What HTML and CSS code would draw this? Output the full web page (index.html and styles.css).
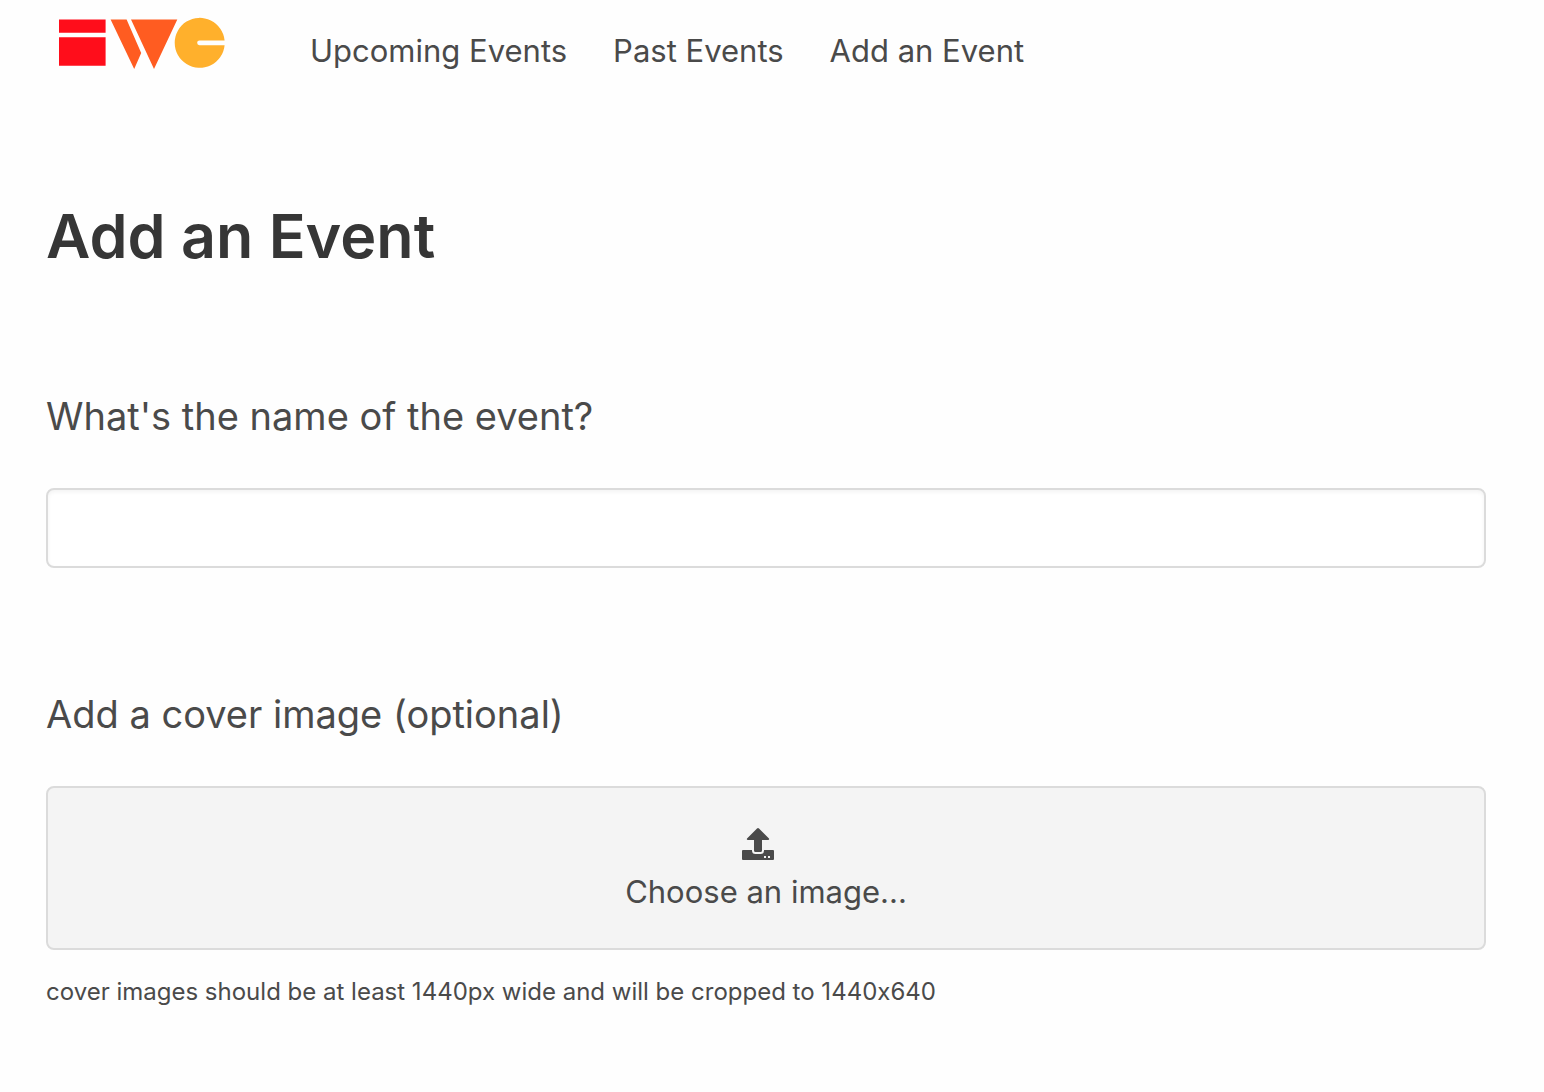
FILE: index.html
```html
<!DOCTYPE html>
<html lang="en">
<head>
    <meta charset="UTF-8">
    <meta name="viewport" content="width=device-width, initial-scale=1.0">
    <title>Add an Event</title>
    <link rel="stylesheet" href="styles.css">
</head>
<body>
    <nav class="navbar">
        <a href="/" class="navbar-brand" aria-label="Home">
            <svg class="logo" viewBox="0 0 168 54" aria-hidden="true">
                <path fill="#ff0d1b" d="M1 3.6h46.6v13.2H1zM1 21.2h46.6v28.6H1z"/>
                <path fill="#ff5c21" d="M52.6 3.6h16l14.6 33.4-7 16zM73 3.6h46.3L96 53z"/>
                <path fill="#ffb02c" d="M166.6 24.5A25 25 0 1 0 166.6 29.2H141.5a2.35 2.35 0 0 1 0-4.7z"/>
            </svg>
        </a>
        <a href="/events" class="navbar-item">Upcoming Events</a>
        <a href="/events/past" class="navbar-item">Past Events</a>
        <a href="/events/new" class="navbar-item">Add an Event</a>
    </nav>

    <main class="container">
        <h1 class="title">Add an Event</h1>
        <form>
            <div class="field">
                <label class="label" for="event-name">What's the name of the event?</label>
                <input class="input" type="text" id="event-name" name="name">
            </div>
            <div class="field">
                <label class="label" for="event-cover">Add a cover image (optional)</label>
                <label class="file">
                    <input class="file-input" type="file" id="event-cover" name="cover" accept="image/*">
                    <svg class="file-icon" viewBox="0 0 32 32" aria-hidden="true">
                        <path d="M15 .5q1-1 2 0l10 10q.7 1.5-1 1.5h-6v10.500q0 1.500-1.500 1.500h-5q-1.500 0-1.500-1.500V12H6q-1.700 0-1-1.500z"/>
                        <path fill-rule="evenodd" d="M1 22h9v.5q0 3.500 3.500 3.500h5q3.500 0 3.500-3.500V22h9q1 0 1 1v8q0 1-1 1H1q-1 0-1-1v-8q0-1 1-1zM22 28v2h2v-2zM26 28v2h2v-2z"/>
                    </svg>
                    <span class="file-label">Choose an image...</span>
                </label>
                <p class="help">cover images should be at least 1440px wide and will be cropped to 1440x640</p>
            </div>
        </form>
    </main>
</body>
</html>
```

FILE: styles.css
```css
* {
    box-sizing: border-box;
}

body {
    margin: 0;
    background-color: #fefefe;
    color: #4a4a4a;
    font-family: Inter, "Liberation Sans", sans-serif;
    font-size: 31px;
    line-height: 48px;
}

.navbar {
    display: flex;
    align-items: center;
    gap: 46px;
    height: 104px;
    padding: 0 58px 2px;
}

.navbar-brand {
    margin-right: 38px;
    padding-bottom: 16px;
}

.logo {
    display: block;
    width: 168px;
    height: 54px;
}

.navbar-item {
    color: #4a4a4a;
    text-decoration: none;
}

.container {
    padding: 96px 58px 48px 46px;
}

.title {
    margin: 0 0 108px;
    color: #363636;
    font-size: 61px;
    font-weight: 600;
    line-height: 72px;
}

.field {
    margin-bottom: 110px;
}

.field:last-child {
    margin-bottom: 0;
}

.label {
    display: block;
    margin-bottom: 36px;
    font-size: 38px;
    line-height: 72px;
}

.input {
    display: block;
    width: 100%;
    height: 80px;
    padding: 0 20px;
    border: 2px solid #dbdbdb;
    border-radius: 8px;
    background-color: white;
    box-shadow: inset 0 2px 4px rgba(10, 10, 10, 0.05);
    color: #363636;
    font: inherit;
}

.file {
    display: flex;
    flex-direction: column;
    align-items: center;
    position: relative;
    padding: 40px 96px 32px;
    border: 2px solid #dbdbdb;
    border-radius: 8px;
    background-color: #f4f4f4;
    overflow: hidden;
    cursor: pointer;
}

.file-input {
    position: absolute;
    inset: 0;
    opacity: 0;
    cursor: pointer;
}

.file-icon {
    width: 32px;
    height: 32px;
    margin: 0 16px 8px 0;
    fill: #4a4a4a;
}

.help {
    margin: 24px 0 0;
    font-size: 24px;
    line-height: 36px;
    /* keeps the x in 1440x640 a plain letter */
    font-feature-settings: "calt" 0;
}
```
